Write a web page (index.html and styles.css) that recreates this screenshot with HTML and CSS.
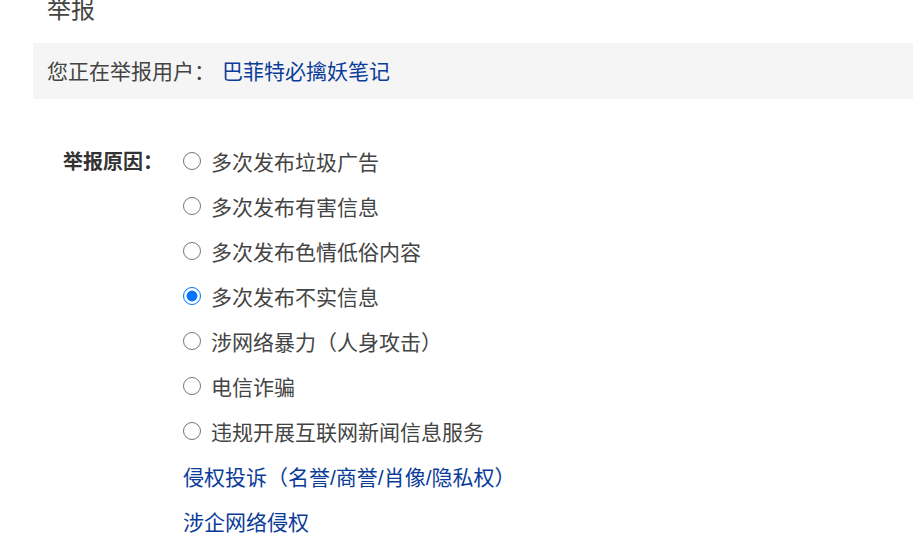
FILE: index.html
```html
<!DOCTYPE html>
<html>
<head>
    <title>举报</title>
    <meta charset="utf-8">
    <link rel="stylesheet" href="styles.css">
</head>
<body>
    <div class="report">
        <h2 class="report-title">举报</h2>

        <div class="report-target">
            您正在举报用户：<a href="#" class="target-name">巴菲特必擒妖笔记</a>
        </div>

        <div class="reason-form">
            <div class="reason-label">举报原因：</div>
            <div class="reason-list">
                <label class="reason-item"><input type="radio" name="reason"> 多次发布垃圾广告</label>
                <label class="reason-item"><input type="radio" name="reason"> 多次发布有害信息</label>
                <label class="reason-item"><input type="radio" name="reason"> 多次发布色情低俗内容</label>
                <label class="reason-item"><input type="radio" name="reason" checked> 多次发布不实信息</label>
                <label class="reason-item"><input type="radio" name="reason"> 涉网络暴力（人身攻击）</label>
                <label class="reason-item"><input type="radio" name="reason"> 电信诈骗</label>
                <label class="reason-item"><input type="radio" name="reason"> 违规开展互联网新闻信息服务</label>
                <a href="#" class="reason-link">侵权投诉（名誉/商誉/肖像/隐私权）</a>
                <a href="#" class="reason-link">涉企网络侵权</a>
            </div>
        </div>
    </div>
</body>
</html>
```

FILE: styles.css
```css
/* 基础样式 */
body {
    font-family: "Liberation Sans", "Noto Sans CJK SC", sans-serif;
    margin: 0;
    padding: 0;
    background-color: #fff;
    color: #333;
    overflow: hidden;
}

.report {
    padding-left: 33px;
}

.report-title {
    margin: -8px 0 15px;
    padding-left: 14px;
    font-size: 24px;
    font-weight: normal;
    line-height: 36px;
    color: #444;
}

.report-target {
    background-color: #f5f5f5;
    height: 56px;
    line-height: 58px;
    padding-left: 14px;
    font-size: 21px;
    color: #444;
}

.target-name {
    margin-left: 7px;
    color: #0b3c9a;
    text-decoration: none;
}

.reason-form {
    display: flex;
    margin-top: 39px;
}

.reason-label {
    flex-shrink: 0;
    width: 150px;
    padding-left: 30px;
    box-sizing: border-box;
    height: 45px;
    line-height: 48px;
    font-size: 20px;
    font-weight: bold;
    white-space: nowrap;
    color: #333;
}

.reason-list {
    display: flex;
    flex-direction: column;
}

.reason-item,
.reason-link {
    display: flex;
    align-items: center;
    height: 45px;
    font-size: 21px;
}

.reason-item {
    color: #444;
}

.reason-item input {
    width: 18px;
    height: 18px;
    margin: 0 10px 0 0;
}

.reason-link {
    color: #0b3c9a;
    text-decoration: none;
}
```
